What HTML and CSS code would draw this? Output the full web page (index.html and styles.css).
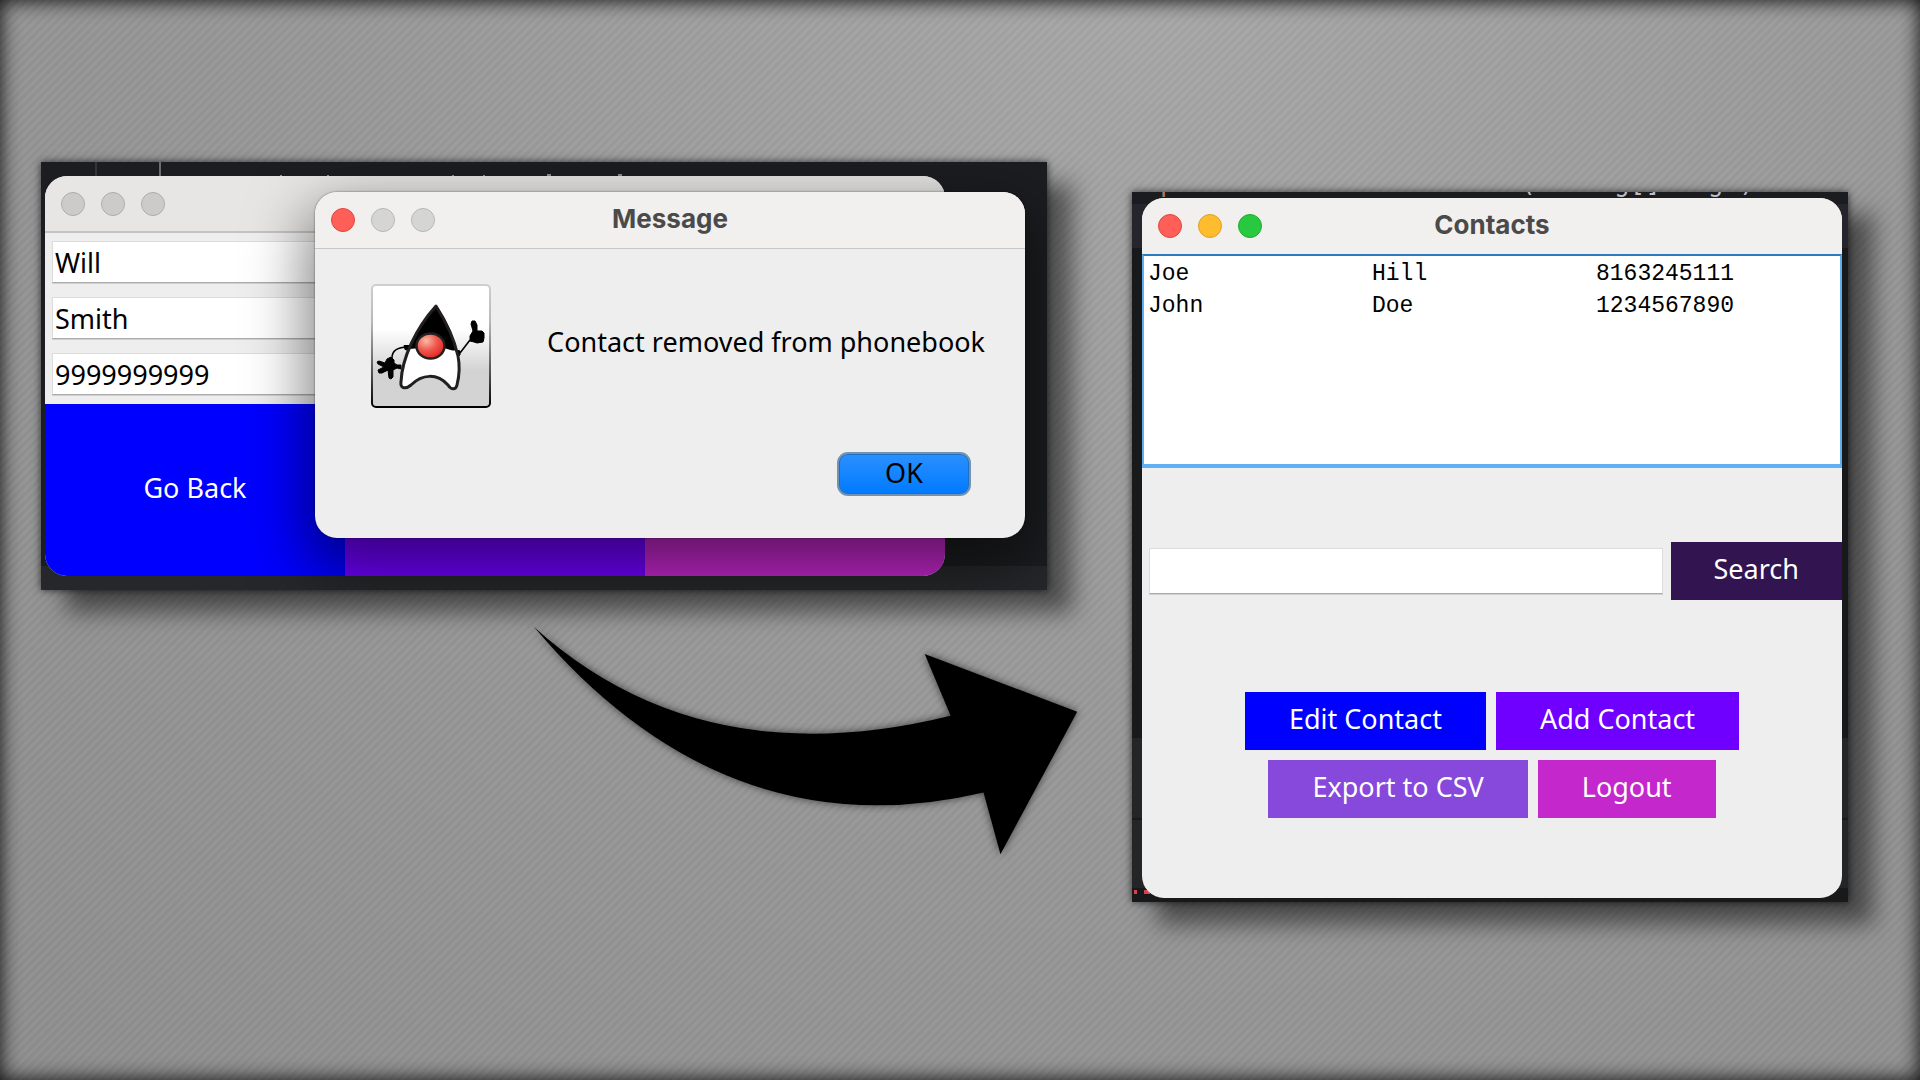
FILE: index.html
```
<!DOCTYPE html>
<html lang="en">
<head>
<meta charset="utf-8">
<meta name="viewport" content="width=device-width, initial-scale=1">
<title>Phonebook – remove contact</title>
<link rel="stylesheet" href="styles.css">
</head>
<body>
<main class="slide">
  <section class="step step-before">
    <div class="capture capture-edit">
      <form class="window window-edit">
        <header class="titlebar">
          <span class="lights"><i class="light"></i><i class="light"></i><i class="light"></i></span>
        </header>
        <div class="fields">
          <input class="field" type="text" value="Will" aria-label="First name">
          <input class="field" type="text" value="Smith" aria-label="Last name">
          <input class="field" type="text" value="9999999999" aria-label="Phone number">
        </div>
        <div class="edit-actions">
          <button class="btn btn-blue" type="button">Go Back</button>
          <button class="btn btn-violet" type="button" aria-label="Save"></button>
          <button class="btn btn-magenta" type="button" aria-label="Remove"></button>
        </div>
      </form>
      <div class="window dialog" role="dialog" aria-labelledby="dialog-title">
        <header class="titlebar">
          <span class="lights"><i class="light light-red"></i><i class="light"></i><i class="light"></i></span>
          <h2 class="title" id="dialog-title">Message</h2>
        </header>
        <div class="dialog-body">
          <svg class="duke" viewBox="0 0 120 124" aria-hidden="true">
            <defs>
              <linearGradient id="plate" x1="0" y1="0" x2="0" y2="1">
                <stop offset="0" stop-color="#fff"/><stop offset=".36" stop-color="#fff"/>
                <stop offset=".7" stop-color="#d3d3d3"/><stop offset="1" stop-color="#d3d3d3"/>
              </linearGradient>
              <linearGradient id="rim" x1="0" y1="0" x2="0" y2="1">
                <stop offset="0" stop-color="#cfcfcf"/><stop offset=".3" stop-color="#b8b8b8"/>
                <stop offset=".75" stop-color="#4a4a4a"/><stop offset="1" stop-color="#000"/>
              </linearGradient>
              <radialGradient id="nose" cx=".35" cy=".3" r=".75">
                <stop offset="0" stop-color="#fbb9a4"/><stop offset=".5" stop-color="#ee5a50"/><stop offset="1" stop-color="#e3201c"/>
              </radialGradient>
            </defs>
            <rect x="1" y="1" width="118" height="122" rx="4" fill="url(#plate)" stroke="url(#rim)" stroke-width="2"/>
            <path d="M37 63C27 63 21 66 21 74" fill="none" stroke="#000" stroke-width="1.6"/>
            <path d="M33 61.500h5v5l-4-1zM30 81l-4 0-3-2 0-3-3-3-4 2-2 4-6-2-2 1 1 2 6 3-6 3 1 3 3 0 6-3 1 8 2 1 2-2 0-7 4-2 4 1z" fill="#000" stroke="#000" stroke-width="1" stroke-linejoin="round"/>
            <path d="M89 69l10-13" stroke="#000" stroke-width="1.6"/>
            <path d="M85 66l4 1 0 4-3 2zM99 57l0-5 3-5-2-7 1-3 3 0 2 4 0 6 5 0 2 2 0 5-1 4-6 1-3-1z" fill="#000" stroke="#000" stroke-width="1" stroke-linejoin="round"/>
            <path d="M65 21C54 35 45 49 39 65L58 70L86 66C82 50 75 35 65 21Z" fill="#000"/>
            <path d="M38 65L50 64C55 76 67 76 73 64L86 68C89 80 88 93 86 101C85 106 80 106 77 101C66 89 51 90 40 101C34 106 29 104 30 98C31 86 34 76 38 65Z" fill="#fff"/>
            <path d="M65 22C74 36 83 54 87 72C89 82 88 93 86 101C85 106 80 106 77 101C66 89 51 90 40 101C34 106 29 104 30 98C31 74 45 44 65 22Z" fill="none" stroke="#231f20" stroke-width="3" stroke-linejoin="round"/>
            <ellipse cx="59.500" cy="62" rx="14" ry="12.500" fill="url(#nose)" stroke="#231f20" stroke-width="2.500"/>
          </svg>
          <p class="dialog-text">Contact removed from phonebook</p>
        </div>
        <footer class="dialog-foot">
          <button class="ok" type="button">OK</button>
        </footer>
      </div>
    </div>
    <svg class="arrow" viewBox="0 0 545 228" aria-hidden="true">
      <path d="M0 0Q167 151 418 89L392 27L545 85L468 228L451 166Q192 227 0 0Z"/>
    </svg>
  </section>

  <section class="step step-after">
    <div class="capture capture-contacts">
      <code class="code-line" aria-hidden="true"><b>public static void</b> main(String[] args)</code>
      <div class="window window-contacts">
        <header class="titlebar">
          <span class="lights"><i class="light light-red"></i><i class="light light-amber"></i><i class="light light-green"></i></span>
          <h2 class="title">Contacts</h2>
        </header>
        <div class="list">
          <table class="contacts">
            <tr><td>Joe</td><td>Hill</td><td>8163245111</td></tr>
            <tr><td>John</td><td>Doe</td><td>1234567890</td></tr>
          </table>
        </div>
        <form class="search">
          <input class="field" type="text" aria-label="Search contacts">
          <button class="btn btn-plum" type="button">Search</button>
        </form>
        <div class="actions">
          <div class="action-row">
            <button class="btn btn-blue" type="button">Edit Contact</button>
            <button class="btn btn-violet" type="button">Add Contact</button>
          </div>
          <div class="action-row">
            <button class="btn btn-lilac" type="button">Export to CSV</button>
            <button class="btn btn-magenta" type="button">Logout</button>
          </div>
        </div>
      </div>
    </div>
  </section>
</main>
</body>
</html>
```
FILE: styles.css
```
* { box-sizing: border-box; }

body {
  margin: 0;
  font-family: "Noto Sans", "Open Sans", sans-serif;
  font-size: 27px;
  color: #000;
}

h2, p { margin: 0; }

button, input { font: inherit; border: 0; margin: 0; }

/* Grey pinstriped backdrop with darkened edges */
.slide {
  display: grid;
  grid-template-columns: 1006fr 716fr;
  column-gap: 85px;
  align-items: start;
  min-height: 100vh;
  padding: 162px 72px 162px 41px;
  background:
    repeating-linear-gradient(135deg, rgba(0, 0, 0, .03) 0 2px, rgba(255, 255, 255, .02) 3px 5px, rgba(0, 0, 0, .03) 6px),
    radial-gradient(ellipse at 60% 0, #a8a8a8 0, #999 50%, #8f8f8f 100%);
  box-shadow: inset 0 0 20px rgba(0, 0, 0, .95);
}

.step-after { padding-top: 30px; }

.capture {
  position: relative;
  box-shadow: 0 0 8px rgba(0, 0, 0, .7), 25px 22px 22px rgba(0, 0, 0, .5);
}

.capture-edit {
  padding: 14px 102px 14px 4px;
  overflow: hidden;
  background:
    linear-gradient(#333438, #333438) 54px 0 / 2px 14px no-repeat,
    linear-gradient(#6b6c72, #6b6c72) 118px 0 / 2px 14px no-repeat,
    linear-gradient(#8d8e92, #8d8e92) 239px 13px / 2px 1px no-repeat,
    linear-gradient(#8d8e92, #8d8e92) 286px 13px / 2px 1px no-repeat,
    linear-gradient(#8d8e92, #8d8e92) 411px 13px / 2px 1px no-repeat,
    linear-gradient(#8d8e92, #8d8e92) 442px 13px / 2px 1px no-repeat,
    linear-gradient(#8d8e92, #8d8e92) 506px 12px / 4px 2px no-repeat,
    linear-gradient(#8d8e92, #8d8e92) 577px 12px / 4px 2px no-repeat,
    linear-gradient(#26272a, #26272a) 0 100% / 100% 24px no-repeat,
    #1c1d20;
}

.capture-contacts {
  padding: 6px 6px 4px 10px;
  overflow: hidden;
  background:
    linear-gradient(#d8414f, #d8414f) 2px 698px / 3px 4px no-repeat,
    linear-gradient(#d8414f, #d8414f) 12px 698px / 6px 4px no-repeat,
    linear-gradient(#1b1c1f 12px, #25262d 12px 56px, #18191b 56px 546px, #242527 546px 626px, #18191b 626px 628px, #242527 628px 696px, #18191b 696px);
}

.code-line {
  position: absolute;
  top: -25px;
  left: 28px;
  font: 26px/30px "DejaVu Sans Mono", monospace;
  color: #bcbec4;
  white-space: nowrap;
}

.code-line b { font-weight: 400; color: #b0795f; }

.window {
  position: relative;
  overflow: hidden;
  border-radius: 22px;
  background: #eee;
}

.titlebar {
  position: relative;
  display: flex;
  align-items: center;
  justify-content: center;
  height: 56px;
  background: #f1f0ee;
}

.lights {
  position: absolute;
  left: 16px;
  display: flex;
  gap: 16px;
}

.light {
  width: 24px;
  height: 24px;
  border: 1px solid #b7b7b5;
  border-radius: 50%;
  background: #d5d5d3;
}

.light-red { background: #ff5f57; border-color: #e14640; }
.light-amber { background: #febc2e; border-color: #dfa023; }
.light-green { background: #28c840; border-color: #1dad2b; }

.title {
  padding-bottom: 2px;
  font: 700 26px/32px Inter, sans-serif;
  color: #4b4a49;
}

.field {
  display: block;
  width: 100%;
  height: 42px;
  padding: 0 2px;
  color: #000;
  background: #fff;
  border: 1px solid #dcdcdc;
  border-bottom-color: #ababab;
  box-shadow: 0 1px 0 #d0d0d0;
  outline: 0;
}

.btn {
  height: 58px;
  padding: 0 44px 6px;
  color: #fff;
  white-space: nowrap;
}

.btn-blue { background: #00f; }
.btn-violet { background: #6f00ff; }
.btn-magenta { background: #c427cc; }
.btn-lilac { background: #8748dc; }
.btn-plum { background: #321450; }

/* Edit form */
.window-edit .titlebar {
  height: 57px;
  background: #e7e6e4;
  border-bottom: 2px solid #c4c4c4;
}

.window-edit .light { background: #cccbc9; border-color: #adadab; }

.fields {
  display: grid;
  gap: 14px;
  padding: 8px 7px 9px;
}

.edit-actions {
  display: grid;
  grid-template-columns: repeat(3, 1fr);
}

.edit-actions .btn { height: 172px; }

/* Message dialog over the edit form */
.dialog {
  position: absolute;
  top: 30px;
  left: 274px;
  right: 22px;
  padding-bottom: 42px;
  box-shadow: 0 0 2px rgba(0, 0, 0, .6), 0 24px 60px 8px rgba(0, 0, 0, .5);
}

.dialog .titlebar { height: 57px; border-bottom: 1px solid #c6c6c6; }

.dialog-body {
  display: flex;
  justify-content: space-between;
  padding: 35px 40px 0 56px;
}

.duke { width: 120px; height: 124px; }

.dialog-text { padding-top: 40px; line-height: 36px; }

.dialog-foot {
  display: flex;
  justify-content: flex-end;
  padding: 44px 54px 0;
}

.ok {
  width: 134px;
  height: 44px;
  padding: 0 0 4px;
  color: #000;
  border: 2px solid #7392b2;
  border-radius: 11px;
  background: linear-gradient(#2b90ff, #007aff);
  box-shadow: inset 0 0 0 1px #1d6fc4;
}

/* The arrow runs past its column, towards the contacts window */
.arrow {
  display: block;
  width: 54%;
  margin: 37px 0 0 49%;
  overflow: visible;
  filter: drop-shadow(0 0 4px rgba(0, 0, 0, .6));
}

/* Contacts window */
.list {
  height: 214px;
  padding: 2px 4px;
  background: #fff;
  border: 2px solid #60aeee;
  border-top-color: #2c7cc0;
  border-bottom: 4px solid #60b1f4;
}

.contacts {
  width: 100%;
  table-layout: fixed;
  border-collapse: collapse;
  font: 23px/32px "Liberation Mono", monospace;
}

.contacts td { width: 224px; padding: 0; }
.contacts td:last-child { width: auto; }

.search {
  display: flex;
  align-items: center;
  gap: 8px;
  padding: 74px 0 92px 7px;
}

.search .field { flex: 1; height: 46px; min-width: 0; }
.search .btn { padding-inline: 43px; }

.actions {
  display: grid;
  gap: 10px;
  padding-bottom: 80px;
}

.action-row {
  display: flex;
  justify-content: center;
  gap: 10px;
}
```
